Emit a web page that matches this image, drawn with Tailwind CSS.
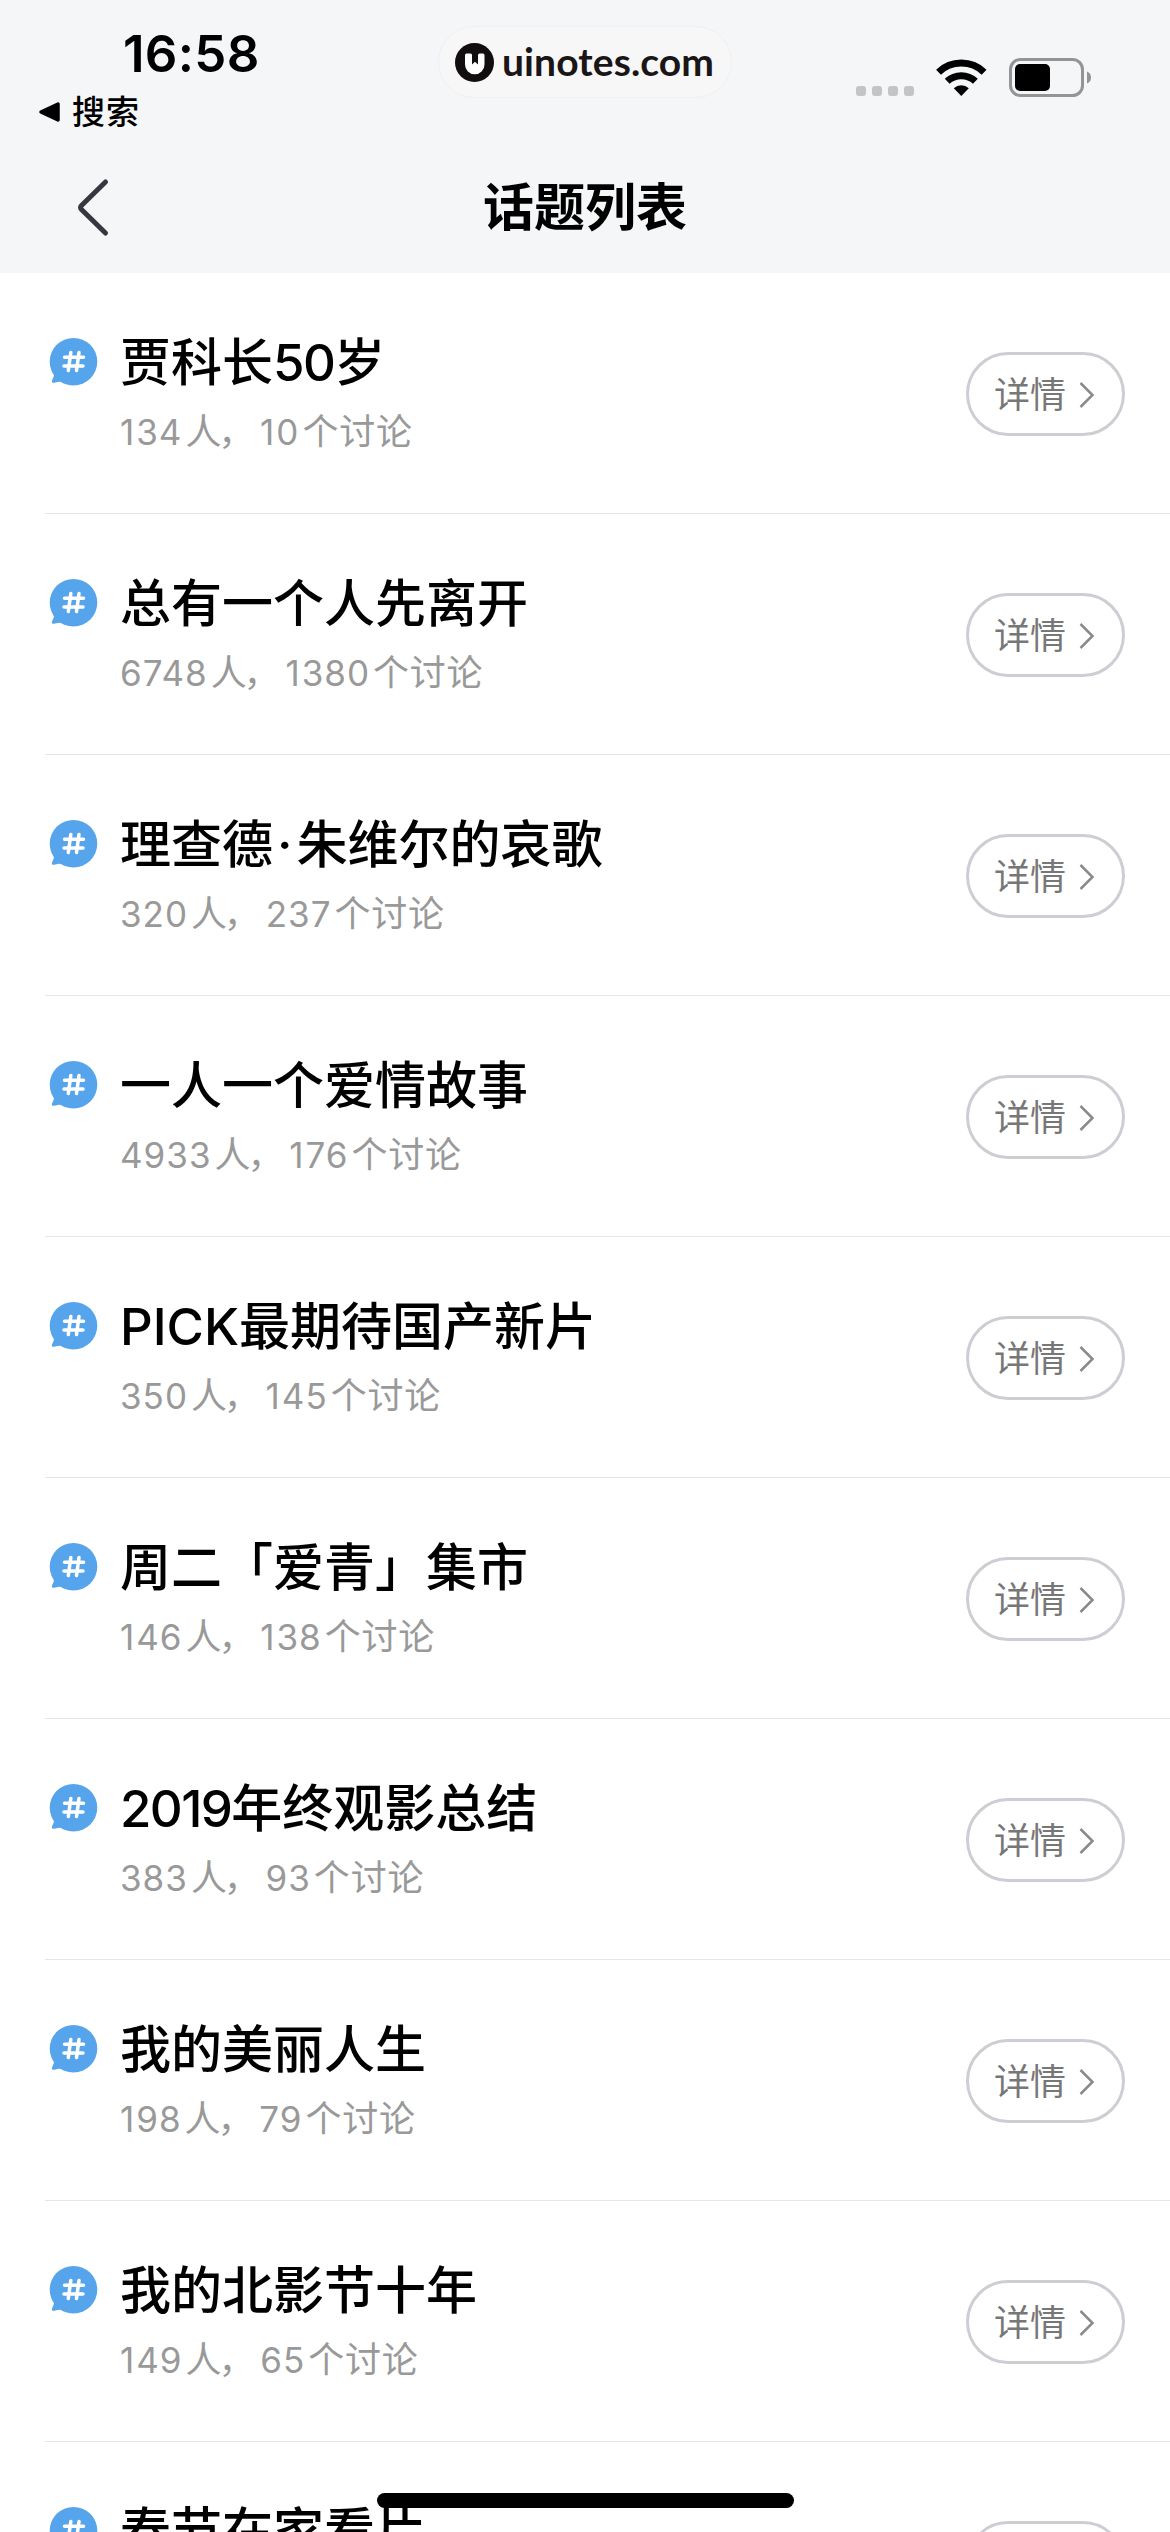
<!DOCTYPE html>
<html lang="zh-CN">
<head>
<meta charset="utf-8">
<title>话题列表</title>
<script src="https://cdn.jsdelivr.net/npm/@tailwindcss/browser@4"></script>
</head>
<body class="relative h-[2532px] w-[1170px] overflow-hidden bg-white text-black font-['Inter','Noto_Sans_CJK_SC',sans-serif]">
<header class="h-[273px] bg-[#f4f6f8]">
  <div class="relative flex h-[142px] justify-between">
    <div class="w-[300px]">
      <div class="h-[82px] pl-[123px] pt-[24px] text-[51px] leading-[60px] font-semibold tracking-[0.3px]">16:58</div>
      <div class="flex items-center pl-[38px] h-[60px]">
        <svg class="w-[22px] h-[22px]" viewBox="0 0 22 22"><path d="M3 11 20 3V19Z" stroke="#000" stroke-width="3.500" stroke-linejoin="round"/></svg>
        <span class="ml-[12px] text-[33px] leading-[60px] font-medium tracking-[1px]">搜索</span>
      </div>
    </div>
    <div class="mt-[26px] flex h-[72px] w-[294px] items-center rounded-full border border-[#eff0f1] bg-[#f7f7f7] pl-[16px]">
      <svg class="w-[39px] h-[39px]" viewBox="0 0 39 39"><circle cx="19.5" cy="19.5" r="19.5" fill="#120d0f"/><path d="M10 12Q10 10.500 11.500 10.500H15.500Q17 10.500 17 12V21.500L20 18.800 23 21.500V12Q23 10.500 24.500 10.500H28Q29.500 10.500 29.500 12V21.500A9.750 9.750 0 0 1 10 21.500Z" fill="#fff"/></svg>
      <span class="ml-[8px] -mt-[3px] text-[39px] leading-[48px] font-bold tracking-[0.1px] text-[#1a1517] font-['Lato',sans-serif]">uinotes.com</span>
    </div>
    <div class="flex w-[300px] pt-[57px]">
      <svg class="ml-[-14px] h-[42px] w-[237px] shrink-0" viewBox="856 57 237 42">
        <g fill="#c4c4c7"><rect x="856" y="86" width="10" height="10" rx="3"/><rect x="872" y="86" width="10" height="10" rx="3"/><rect x="888" y="86" width="10" height="10" rx="3"/><rect x="904" y="86" width="10" height="10" rx="3"/></g>
        <g fill="none" stroke="#000" stroke-width="7"><path d="M938.500 72.200A33 33 0 0 1 984.100 72.200"/><path d="M947.200 81.300A20.500 20.500 0 0 1 975.400 81.300"/></g>
        <path d="M961.300 96 953.800 88.300A11 11 0 0 1 968.800 88.300Z"/>
        <rect x="1010.500" y="59.500" width="72" height="36" rx="10" fill="none" stroke="#939496" stroke-width="3"/>
        <rect x="1015" y="64" width="35" height="27" rx="5"/>
        <path d="M1087 71.500Q1091 73 1091 77.500T1087 83.500Z" fill="#939496"/>
      </svg>
    </div>
  </div>
  <div class="relative flex h-[131px] justify-center">
    <svg class="absolute left-[75px] top-[36px] w-[36px] h-[60px]" viewBox="0 0 36 60" fill="none" stroke="#373742" stroke-width="5" stroke-linecap="round" stroke-linejoin="round"><path d="M30.500 4 6.500 27.500Q4.500 29.500 6.500 31.500L30.500 55"/></svg>
    <h1 class="pt-[29px] text-[51px] leading-[74px] font-bold">话题列表</h1>
  </div>
</header>
<main id="list" class="h-[2259px] overflow-hidden"></main>
<div class="absolute left-[377px] top-[2493px] h-[15px] w-[417px] rounded-full bg-black"></div>
<script>
const topics = [
  ['贾科长50岁', 134, 10], ['总有一个人先离开', 6748, 1380], ['理查德·朱维尔的哀歌', 320, 237],
  ['一人一个爱情故事', 4933, 176], ['PICK最期待国产新片', 350, 145], ['周二「爱青」集市', 146, 138],
  ['2019年终观影总结', 383, 93], ['我的美丽人生', 198, 79], ['我的北影节十年', 149, 65], ['春节在家看片']
];
const latin = s => s
  .replace(/[0-9]+/g, '<span class="text-[51px] tracking-[-1.6px]">$&</span>')
  .replace(/[A-Z]{2,}/g, '<span>$&</span>')
  .replace('·', '<span class="mx-[4px]">·</span>');
const num = n => `<span class="text-[35px] mr-[3px] tracking-[1px]">${String(n).replace('1', '<span class="mr-[1px]">1</span>')}</span>`;
document.getElementById('list').innerHTML = topics.map(([title, people, posts]) => `
<section class="flex h-[241px] pl-[45px]">
  <div class="flex w-full border-b border-[#e5e6e8]">
    <svg class="ml-[4px] mt-[64px] h-[50px] w-[50px] shrink-0" viewBox="0 0 50 50"><circle cx="24.500" cy="24.700" r="23.800" fill="#56a5ec"/><path d="M4.500 35.500Q5.500 37.500 4.500 40L3 43.500Q2.300 46 5 45.800L10 44.700Q12 44.300 15 46.500L20 34Z" fill="#56a5ec"/><path d="M21.800 15.500 19.300 33.500M30 15.500 27.500 33.500M15.500 20.300H34.500M15 29H34" stroke="#fff" stroke-width="3.500" stroke-linecap="round"/></svg>
    <div class="ml-[21px] grow pt-[53px]">
      <h2 class="h-[74px] whitespace-nowrap text-[51px] leading-[74px] font-medium">${latin(title)}</h2>
      ${people ? `<p class="h-[54px] -mt-[4px] whitespace-nowrap text-[36px] leading-[72px] text-[#999] tracking-[0.8px]">${num(people)}人<span class="-ml-[4px] mr-[5px]">，</span>${num(posts)}个讨论</p>` : ''}
    </div>
    <button class="mr-[45px] mt-[79px] flex h-[84px] w-[159px] shrink-0 items-center rounded-full border-3 border-[#cdced3] pl-[25px] text-[36px] leading-[52px] text-[#777]">
      <span class="mt-[2px]">详情</span>
      <svg class="ml-[13px] mt-[2px] h-[28px] w-[16px]" viewBox="0 0 16 28" fill="none" stroke="#8a8a8a" stroke-width="2.500"><path d="M1.500 2 13.500 14 1.500 26"/></svg>
    </button>
  </div>
</section>`).join('');
</script>
</body>
</html>
